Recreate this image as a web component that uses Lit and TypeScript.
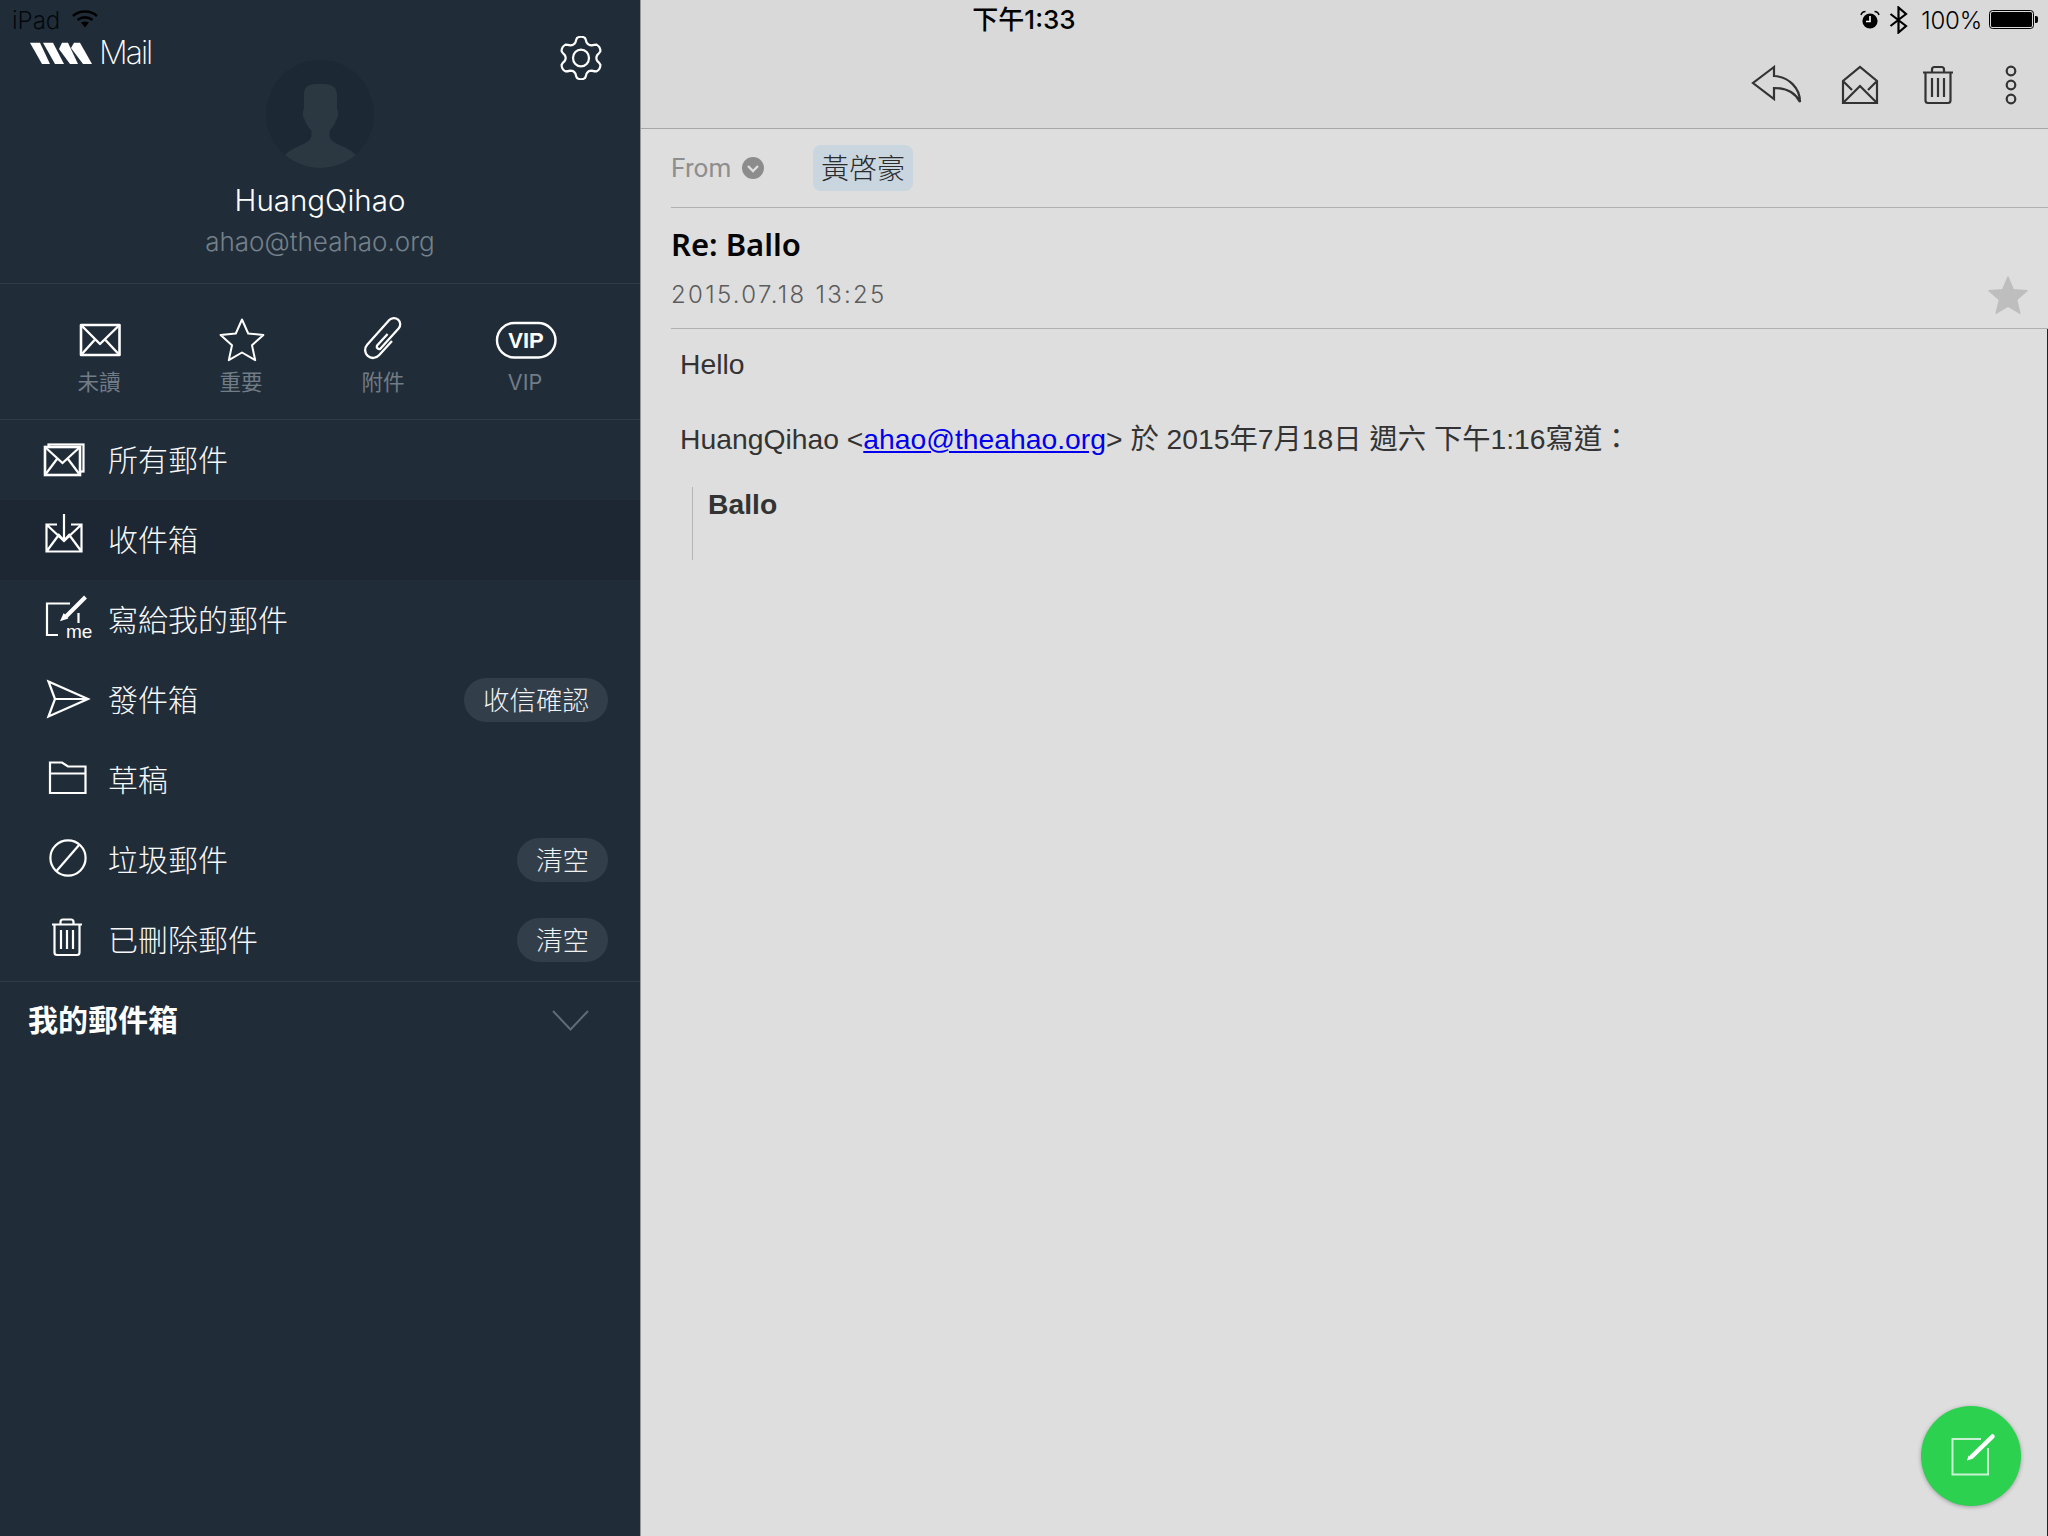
import { LitElement, html, css, svg } from "lit";
import { customElement } from "lit/decorators.js";

function gearPath(cx: number, cy: number): string {
  const teeth = 6;
  const pts: string[] = [];
  for (let i = 0; i < teeth; i++) {
    const a = (-90 + (i * 360) / teeth) * (Math.PI / 180);
    const d = (deg: number) => (deg * Math.PI) / 180;
    const p = (r: number, off: number) =>
      `${(cx + r * Math.cos(a + d(off))).toFixed(1)} ${(cy + r * Math.sin(a + d(off))).toFixed(1)}`;
    const start = p(16.5, -20);
    const t1 = p(20.5, -11);
    const t2 = p(20.5, 11);
    const end = p(16.5, 20);
    const next = p(16.5, 40);
    pts.push(`${i === 0 ? "M" : "L"}${start} Q${p(19, -15)} ${t1} Q${p(22.5, 0)} ${t2} Q${p(19, 15)} ${end} Q${p(14.5, 30)} ${next}`);
  }
  return pts.join(" ") + " Z";
}

function starPoints(cx: number, cy: number, R: number, r: number): string {
  const out: string[] = [];
  for (let i = 0; i < 10; i++) {
    const a = ((-90 + i * 36) * Math.PI) / 180;
    const rad = i % 2 === 0 ? R : r;
    out.push(`${(cx + rad * Math.cos(a)).toFixed(1)},${(cy + rad * Math.sin(a)).toFixed(1)}`);
  }
  return out.join(" ");
}

const rowIcons = {
  all: svg`<rect x="48.5" y="24.5" width="35" height="27"/><rect x="45" y="27" width="35" height="28" fill="#202d39" stroke-width="2.6"/><path d="M45 27 L62.5 43 L80 27 M45 55 L57 39 M80 55 L68 39"/>`,
  inbox: svg`<path d="M57 24.5 H46.5 V51.5 H81.5 V24.5 H71 M46.5 24.5 L64 41 L81.5 24.5 M46.5 51.5 L58 36 M81.5 51.5 L70 36"/><path d="M64 14 V41 M58 34 L64 40.5 L70 34"/>`,
  me: svg`<path d="M70 23.5 H47 V55 H58"/><path d="M85.5 17 L66 36.5" stroke-width="4"/><path d="M62 39.5 L64 35 L66.5 38 Z" fill="#fff"/><path d="M78.5 33 V43"/><text x="66" y="58" class="me">me</text>`,
  send: svg`<path d="M48.5 21.5 L88 39 L48.5 56.5 L55 39 Z M55 39 H88"/>`,
  draft: svg`<path d="M50 53 V22.5 H62 L68 26.5 H85.5 V53 Z M50 33.5 H85.5"/>`,
  spam: svg`<circle cx="68" cy="38" r="17.6"/><path d="M56.5 51 L79.5 24.5"/>`,
  trash: svg`<path d="M52 24.5 H82 M54.5 24.5 V52.5 Q54.5 55 57 55 H77 Q79.5 55 79.5 52.5 V24.5 M60.5 24 V22 Q60.5 19.5 63 19.5 H71 Q73.5 19.5 73.5 22 V24 M61 30 V49 M67 30 V49 M73 30 V49"/>`,
};

const rows: { key: keyof typeof rowIcons; label: string; badge?: string; active?: boolean }[] = [
  { key: "all", label: "所有郵件" },
  { key: "inbox", label: "收件箱", active: true },
  { key: "me", label: "寫給我的郵件" },
  { key: "send", label: "發件箱", badge: "收信確認" },
  { key: "draft", label: "草稿" },
  { key: "spam", label: "垃圾郵件", badge: "清空" },
  { key: "trash", label: "已刪除郵件", badge: "清空" },
];

const quick = [
  {
    label: "未讀",
    icon: svg`<rect x="52" y="41" width="38.5" height="30" stroke-width="2.6"/><path d="M52 41 L71 60 L90.5 41 M52 71 L66 55.5 M90.5 71 L76 55.5"/>`,
  },
  {
    label: "重要",
    icon: svg`<polygon points="${starPoints(71, 58, 22.5, 10.5)}" stroke-width="2"/>`,
  },
  {
    label: "附件",
    icon: svg`<g transform="translate(70 55) rotate(42) scale(1.14)"><path stroke-width="2" d="M7 -4 V13 a7 7 0 0 1 -14 0 V-16 a5.5 5.5 0 0 1 11 0 V8 a2.2 2.2 0 0 1 -4 0 V-6"/></g>`,
  },
  {
    label: "VIP",
    icon: svg`<rect x="42" y="39" width="58.5" height="34.5" rx="17.2"/><text x="71" y="64" class="vip">VIP</text>`,
  },
];

@customElement("app-root")
export class AppRoot extends LitElement {
  static styles = css`
    :host {
      display: block;
      width: 2048px;
      height: 1536px;
      overflow: hidden;
      font-family: "Inter", "Noto Sans CJK TC", sans-serif;
    }
    .page {
      position: relative;
      display: grid;
      grid-template-columns: 640px 1408px;
      height: 1536px;
    }
    .status {
      position: absolute;
      left: 0;
      top: 0;
      width: 2048px;
      height: 40px;
      display: grid;
      grid-template-columns: 1fr auto 1fr;
      align-items: center;
      color: #000;
    }
    .status-left {
      display: flex;
      align-items: center;
      gap: 12px;
      padding-left: 12px;
      font-size: 24px;
      font-weight: 300;
      color: #05090d;
    }
    .wifi {
      display: block;
      margin-top: -2px;
    }
    .clock {
      font-size: 26px;
      line-height: 38px;
      font-weight: 500;
      color: #000;
    }
    .status-right {
      display: flex;
      justify-content: flex-end;
      align-items: center;
      font-size: 24px;
      font-weight: 300;
    }
    .status-right svg {
      display: block;
    }
    .bt {
      margin-left: 9px;
    }
    .battery {
      margin-right: 10px;
    }
    .pct {
      margin: 0 7px 0 13px;
      letter-spacing: -0.2px;
    }
    .sidebar {
      background: #202d39;
      display: flex;
      flex-direction: column;
      color: #fff;
    }
    .profile {
      box-sizing: border-box;
      height: 284px;
      padding-top: 36px;
      border-bottom: 1px solid #2f3b47;
      display: flex;
      flex-direction: column;
      align-items: center;
    }
    .brand {
      align-self: stretch;
      height: 24px;
      display: flex;
      justify-content: space-between;
      align-items: flex-start;
      padding: 0 37px 0 30px;
    }
    .logo {
      display: flex;
      align-items: center;
      gap: 7px;
      height: 28px;
      margin-top: 3px;
    }
    .logo svg {
      display: block;
      fill: #fff;
    }
    .gear {
      display: block;
      fill: none;
      stroke: #fff;
      stroke-width: 2.2;
    }
    .logo-text {
      font-size: 32px;
      font-weight: 200;
      line-height: 28px;
      letter-spacing: -2px;
    }
    .avatar {
      display: block;
    }
    .name {
      margin-top: 14px;
      font-size: 29.5px;
      line-height: 36px;
      font-weight: 300;
    }
    .email {
      margin-top: 8px;
      font-size: 26px;
      line-height: 32px;
      font-weight: 300;
      color: #75808a;
    }
    .quick {
      box-sizing: border-box;
      height: 136px;
      padding-left: 28px;
      display: grid;
      grid-template-columns: repeat(4, 142px);
      border-bottom: 1px solid #2f3b47;
    }
    .q-item {
      display: flex;
      flex-direction: column;
      align-items: center;
    }
    .q-item svg {
      display: block;
      margin-left: 2px;
      fill: none;
      stroke: #fff;
      stroke-width: 2.4;
      stroke-linejoin: round;
    }
    .q-label {
      font-size: 21.5px;
      line-height: 30px;
      margin-top: -8px;
      color: #717c86;
    }
    .vip {
      font-family: "Liberation Sans", sans-serif;
      font-size: 22px;
      font-weight: 700;
      fill: #fff;
      stroke: none;
      text-anchor: middle;
    }
    .row {
      height: 80px;
      display: flex;
      align-items: center;
      padding-right: 32px;
    }
    .row.active {
      background: #1c2733;
    }
    .row svg {
      display: block;
      flex: none;
      fill: none;
      stroke: #fff;
      stroke-width: 2.2;
    }
    .me {
      font-family: "Liberation Sans", sans-serif;
      font-size: 19px;
      fill: #fff;
      stroke: none;
    }
    .row-label {
      flex: 1;
      margin: -5px 0 0 -1px;
      font-size: 30px;
      font-weight: 300;
      color: #f7f8f9;
    }
    .badge {
      box-sizing: border-box;
      height: 44px;
      padding: 0 19px 3px;
      border-radius: 22px;
      background: #323e4a;
      display: flex;
      align-items: center;
      font-size: 26.5px;
      font-weight: 300;
      color: #f0f2f3;
    }
    .section {
      box-sizing: border-box;
      height: 78px;
      border-top: 1px solid #2f3b47;
      margin-top: 1px;
      display: flex;
      align-items: center;
      justify-content: space-between;
      padding: 0 51px 0 28px;
      font-size: 30px;
      font-weight: 700;
    }
    .section span {
      margin-top: -5px;
    }
    .section svg {
      display: block;
      fill: none;
      stroke: #5f6b76;
      stroke-width: 2;
    }
    .main {
      position: relative;
      background: #dedede;
      border-left: 1px solid #969696;
      display: flex;
      flex-direction: column;
      color: #333;
    }
    .toolbar {
      box-sizing: border-box;
      height: 129px;
      background: #d9d9d9;
      border-bottom: 1px solid #a6a6a6;
      display: flex;
      justify-content: flex-end;
    }
    .toolbar svg {
      display: block;
      fill: none;
      stroke: #333;
      stroke-width: 2.2;
    }
    .from {
      box-sizing: border-box;
      height: 79px;
      margin-left: 30px;
      border-bottom: 1px solid #b0b0b0;
      display: flex;
      align-items: center;
    }
    .from-label {
      width: 61px;
      font-family: "Roboto", sans-serif;
      font-size: 26px;
      color: #8e8e8e;
    }
    .from svg {
      display: block;
      margin-left: 10px;
    }
    .chip {
      margin-left: 49px;
      box-sizing: border-box;
      width: 100px;
      height: 46px;
      padding-bottom: 2px;
      border-radius: 8px;
      background: #c9d6e0;
      display: flex;
      align-items: center;
      justify-content: center;
      font-size: 28px;
      font-weight: 300;
      color: #2b2b2b;
    }
    .head {
      box-sizing: border-box;
      height: 121px;
      margin-left: 30px;
      border-bottom: 1px solid #b0b0b0;
      display: flex;
      justify-content: space-between;
      padding: 16px 20px 0 0;
    }
    .subject {
      font-family: "Noto Sans", sans-serif;
      font-size: 31px;
      line-height: 40px;
      font-weight: 600;
      color: #050505;
    }
    .date {
      margin-top: 16px;
      font-size: 24px;
      line-height: 30px;
      font-weight: 300;
      letter-spacing: 2.3px;
      color: #5c5c5c;
    }
    .head svg {
      display: block;
      align-self: flex-end;
      margin-bottom: 14px;
    }
    .body {
      flex: 1;
      border-right: 1px solid #222;
      padding: 15px 0 0 39px;
      font-family: "Liberation Sans", "Noto Sans CJK TC", sans-serif;
      font-size: 28.3px;
      line-height: 40px;
      color: #333;
    }
    .body p {
      margin: 0;
    }
    .body p + p {
      margin-top: 35px;
    }
    .body a {
      color: #0000ee;
      text-decoration: underline;
    }
    .quote {
      box-sizing: border-box;
      height: 73px;
      margin: 28px 0 0 12px;
      padding-left: 15px;
      border-left: 1px solid #b5b5b5;
      font-weight: 700;
      line-height: 34px;
    }
    .fab {
      position: absolute;
      right: 27px;
      bottom: 30px;
      width: 100px;
      height: 100px;
      border-radius: 50%;
      background: #2bd14f;
      box-shadow: 0 1px 4px rgba(0, 0, 0, 0.3);
    }
    .fab svg {
      display: block;
      fill: none;
    }
  `;

  render() {
    return html`
      <div class="page">
        <aside class="sidebar">
          <div class="profile">
            <div class="brand">
              <div class="logo">
                <svg width="62" height="24" viewBox="30 40 62 24">
                  <polygon points="30,41.7 40,41.7 50,63 42,63" />
                  <polygon points="43,41.7 53,41.7 64,63 55,63" />
                  <polygon points="59,48 62,41.7 68,41.7 78,63 70,63" />
                  <polygon points="71,47 74,41.7 80,41.7 92,63 83,63" />
                </svg>
                <span class="logo-text">Mail</span>
              </div>
              <svg class="gear" width="44" height="44" viewBox="559 35 44 44">
                <path d="${gearPath(581, 57)}" />
                <ellipse cx="581" cy="57" rx="8" ry="8.4" />
              </svg>
            </div>
            <svg class="avatar" width="108" height="108" viewBox="0 0 108 108">
              <circle cx="54" cy="54" r="54" fill="#1c2834" />
              <path
                fill="#2b3741"
                d="M19 95 C27 87 35 86 41 82 C46 79 46 74 45 70 C40 65 39 60 37 56 C36 52 38 50 38 47 V35 C38 24 46 24 54 24 C62 24 71 24 71 35 V47 C71 50 73 52 72 56 C70 60 69 65 64 70 C63 74 63 79 68 82 C74 86 82 87 90 95 C80 103 67 108 54 108 C41 108 29 103 19 95 Z"
              />
            </svg>
            <div class="name">HuangQihao</div>
            <div class="email">ahao@theahao.org</div>
          </div>
          <div class="quick">
            ${quick.map(
              (q) => html`
                <div class="q-item">
                  <svg width="142" height="91" viewBox="0 0 142 91">${q.icon}</svg>
                  <div class="q-label">${q.label}</div>
                </div>
              `
            )}
          </div>
          ${rows.map(
            (r) => html`
              <div class="row ${r.active ? "active" : ""}">
                <svg width="109" height="80" viewBox="0 0 109 80">${rowIcons[r.key]}</svg>
                <div class="row-label">${r.label}</div>
                ${r.badge ? html`<div class="badge">${r.badge}</div>` : ""}
              </div>
            `
          )}
          <div class="section">
            <span>我的郵件箱</span>
            <svg width="37" height="21" viewBox="0 0 37 21"><path d="M1 1 L18.5 19.5 L36 1" /></svg>
          </div>
        </aside>
        <main class="main">
          <div class="toolbar">
            <svg width="300" height="128" viewBox="1748 0 300 128">
              <path d="M1774 67 L1753 83 L1774 99 V88 C1785 88 1795 92 1800 102 C1800 88 1789 77 1774 76 Z" />
              <path d="M1843 103 V81 L1860 67 L1877 81 V103 Z M1843 103 L1860 86 L1877 103 M1843 81 L1852 90 M1877 81 L1868 90" />
              <path d="M1923 72.5 H1953 M1925.5 72.5 V100.5 Q1925.5 103 1928 103 H1948 Q1950.5 103 1950.5 100.5 V72.5 M1932 72 V69.5 Q1932 67 1934.5 67 H1941.5 Q1944 67 1944 69.5 V72 M1932 78 V97 M1938 78 V97 M1944 78 V97" />
              <circle cx="2011" cy="71" r="4.3" />
              <circle cx="2011" cy="85" r="4.3" />
              <circle cx="2011" cy="99" r="4.3" />
            </svg>
          </div>
          <div class="from">
            <span class="from-label">From</span>
            <svg width="22" height="22" viewBox="0 0 22 22">
              <circle cx="11" cy="11" r="11" fill="#8c8c8c" />
              <path d="M6 9 L11 14 L16 9" fill="none" stroke="#dedede" stroke-width="2.4" />
            </svg>
            <div class="chip">黃啓豪</div>
          </div>
          <div class="head">
            <div>
              <div class="subject">Re: Ballo</div>
              <div class="date">2015.07.18 13:25</div>
            </div>
            <svg width="40" height="38" viewBox="0 0 40 38">
              <polygon points="${starPoints(20, 21, 20, 9)}" fill="#bebebe" stroke="#bebebe" stroke-width="1.5" stroke-linejoin="round" />
            </svg>
          </div>
          <div class="body">
            <p>Hello</p>
            <p>HuangQihao &lt;<a href="#">ahao@theahao.org</a>&gt; 於 2015年7月18日 週六 下午1:16寫道：</p>
            <div class="quote">Ballo</div>
          </div>
          <div class="fab">
            <svg width="100" height="100" viewBox="0 0 100 100">
              <path d="M60 33 H31.5 V68.5 H67 V42" stroke="#c9f2d3" stroke-width="2" />
              <path d="M71.5 30.5 L50.7 50.7" stroke="#fff" stroke-width="4.5" stroke-linecap="round" />
              <polygon points="46,54.5 47.5,49.5 51,53" fill="#fff" />
            </svg>
          </div>
        </main>
        <div class="status">
          <div class="status-left">
            <span>iPad</span>
            <svg class="wifi" width="26" height="20" viewBox="0 0 26 20" fill="none" stroke="#000" stroke-width="2.6">
              <path d="M1 7 C7.5 1 18.5 1 25 7 M5.5 11 C10 7.5 16 7.5 20.5 11" />
              <path d="M9 13.5 L13 18.5 L17 13.5 C14.5 12 11.5 12 9 13.5 Z" fill="#000" stroke="none" />
            </svg>
          </div>
          <div class="clock">下午1:33</div>
          <div class="status-right">
            <svg width="20" height="20" viewBox="0 0 20 20">
              <circle cx="10" cy="11" r="7.6" fill="#000" />
              <path d="M10 6 V11.5 H6" fill="none" stroke="#fff" stroke-width="1.6" />
              <path d="M1 5 Q2 1.5 5.5 1.5 M19 5 Q18 1.5 14.5 1.5" fill="none" stroke="#000" stroke-width="1.5" />
            </svg>
            <svg class="bt" width="19" height="28" viewBox="0 0 19 28" fill="none" stroke="#000" stroke-width="2.2">
              <path d="M1.5 8 L17 20 L9.5 26.5 V1.5 L17 8 L1.5 20" />
            </svg>
            <span class="pct">100%</span>
            <svg class="battery" width="49" height="20" viewBox="0 0 49 20">
              <rect x="0.5" y="0.5" width="44" height="18" rx="3" fill="none" stroke="#000" />
              <rect x="2" y="2" width="41" height="15" rx="1.5" fill="#000" />
              <path d="M46 6 H47 Q49 6 49 8 V11 Q49 13 47 13 H46 Z" fill="#000" />
            </svg>
          </div>
        </div>
      </div>
    `;
  }
}
